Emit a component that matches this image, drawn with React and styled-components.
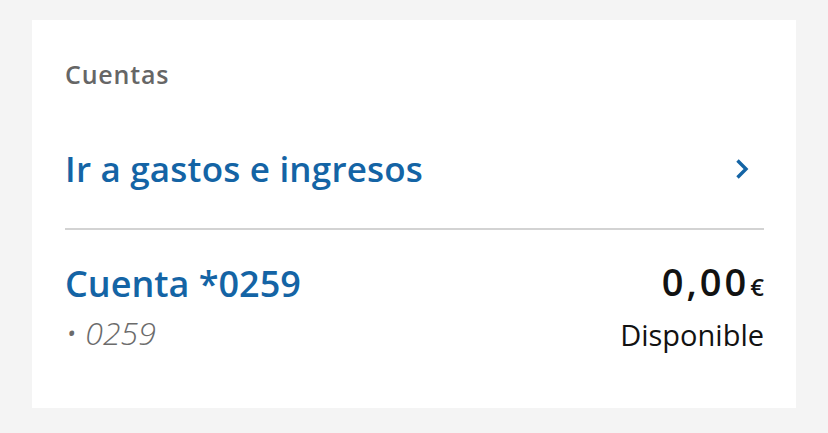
import styled, { createGlobalStyle } from 'styled-components';

const GlobalStyle = createGlobalStyle`
  html, body {
    margin: 0;
    padding: 0;
    background: #f4f4f4;
    font-family: "Open Sans", "Liberation Sans", sans-serif;
  }
`;

const Page = styled.div`
  padding: 20px 32px 25px 32px;
`;

const Card = styled.div`
  background: #ffffff;
  height: 388px;
  box-sizing: border-box;
  padding: 38px 32px 0 33px;
`;

const Title = styled.div`
  font-size: 25px;
  font-weight: 600;
  color: #666666;
  line-height: 32px;
  letter-spacing: 0.8px;
`;

const LinkRow = styled.div`
  display: flex;
  align-items: center;
  justify-content: space-between;
  margin-top: 57px;
  padding-bottom: 37px;
  border-bottom: 2px solid #d3d3d3;
`;

const LinkText = styled.div`
  font-size: 35px;
  font-weight: 600;
  color: #1464a5;
  line-height: 44px;
  letter-spacing: 0.2px;
`;

const Chevron = styled.svg`
  width: 14px;
  height: 22px;
  margin-right: 15px;
`;

const AccountRow = styled.div`
  display: flex;
  justify-content: space-between;
  margin-top: 32px;
`;

const Column = styled.div`
  display: flex;
  flex-direction: column;
  align-items: ${(p) => (p.$right ? 'flex-end' : 'flex-start')};
`;

const AccountName = styled.div`
  font-size: 36px;
  font-weight: 600;
  color: #1464a5;
  line-height: 44px;
`;

const AccountSub = styled.div`
  font-size: 32px;
  font-style: italic;
  font-weight: 300;
  color: #6b6b6b;
  line-height: 40px;
  margin-top: 7px;
`;

const Amount = styled.div`
  font-size: 38px;
  font-weight: 600;
  color: #121212;
  line-height: 32px;
  letter-spacing: 3px;
  margin-top: 3px;
  display: flex;
  align-items: baseline;
`;

const Currency = styled.span`
  font-size: 24px;
  letter-spacing: 0;
  margin-left: 1px;
`;

const Available = styled.div`
  font-size: 29px;
  font-weight: 400;
  color: #121212;
  line-height: 36px;
  margin-top: 14px;
`;

export default function App() {
  return (
    <>
      <GlobalStyle />
      <Page>
        <Card>
          <Title>Cuentas</Title>
          <LinkRow>
            <LinkText>Ir a gastos e ingresos</LinkText>
            <Chevron viewBox="0 0 14 22">
              <path d="M2.5 2.5 L11 11 L2.5 19.5" fill="none" stroke="#1464a5" strokeWidth="3.4" />
            </Chevron>
          </LinkRow>
          <AccountRow>
            <Column>
              <AccountName>Cuenta *0259</AccountName>
              <AccountSub>• 0259</AccountSub>
            </Column>
            <Column $right>
              <Amount>
                0,00<Currency>€</Currency>
              </Amount>
              <Available>Disponible</Available>
            </Column>
          </AccountRow>
        </Card>
      </Page>
    </>
  );
}
